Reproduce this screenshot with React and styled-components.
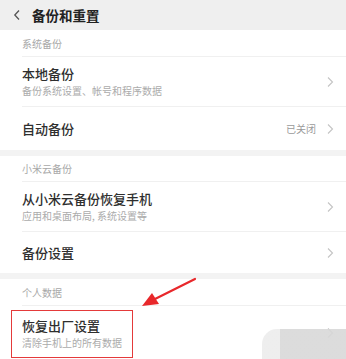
import React from "react";
import styled, { createGlobalStyle } from "styled-components";

const GlobalStyle = createGlobalStyle`
  html, body { margin: 0; padding: 0; background: #ffffff; }
  body { font-family: "Noto Sans CJK SC", "Noto Sans", sans-serif; }
`;

const Page = styled.div`
  position: relative;
  width: 346px;
  height: 359px;
  overflow: hidden;
  background: #ffffff;
`;

const Header = styled.div`
  display: flex;
  align-items: center;
  height: 30px;
  padding-left: 13px;
  gap: 11px;
  background: #efefef;
  color: #222;
  font-size: 13.5px;
  font-weight: 700;
`;

const SectionLabel = styled.div`
  display: flex;
  align-items: center;
  height: ${(p) => p.height}px;
  margin-left: 22px;
  border-bottom: 1px solid #f0f0f0;
  font-size: 10px;
  color: #a8a8a8;
  box-sizing: border-box;
`;

const Band = styled.div`
  height: 6px;
  background: #f3f3f3;
`;

const Row = styled.div`
  display: flex;
  align-items: center;
  height: ${(p) => p.height}px;
  margin-left: 22px;
  padding-right: 12px;
  box-sizing: border-box;
  border-bottom: ${(p) => (p.last ? "none" : "1px solid #f0f0f0")};
`;

const Texts = styled.div`
  flex: 1;
  display: flex;
  flex-direction: column;
  gap: 3px;
`;

const Highlight = styled.div`
  display: flex;
  flex-direction: column;
  gap: 3px;
  align-self: flex-start;
  margin: 4px 0 0 -11px;
  padding: 7px 10px 8px;
  border: 1.5px solid #e43a3a;
`;

const Title = styled.div`
  font-size: 13px;
  font-weight: 500;
  color: #2e2e2e;
  line-height: 16px;
`;

const Sub = styled.div`
  font-size: 10px;
  color: #ababab;
  line-height: 12px;
`;

const Status = styled.span`
  font-size: 10px;
  color: #9a9a9a;
  margin-right: 10px;
`;

const Overlay = styled.svg`
  position: absolute;
  left: 0;
  top: 0;
  pointer-events: none;
`;

const Watermark = styled.div`
  position: absolute;
  right: 0;
  bottom: 0;
  width: 84px;
  height: 30px;
  border-radius: 15px 0 0 0;
  background: linear-gradient(90deg, #ececec 0 22%, #d8d8d8 22% 100%);
  opacity: 0.9;
`;

const Chevron = ({ color = "#c4c4c4" }) => (
  <svg width="8" height="12" viewBox="0 0 8 12">
    <path d="M2 1.5 L6.5 6 L2 10.5" fill="none" stroke={color} strokeWidth="1.1" />
  </svg>
);

const Back = () => (
  <svg width="8" height="12" viewBox="0 0 8 12">
    <path d="M6 1.5 L1.8 6 L6 10.5" fill="none" stroke="#555" strokeWidth="1.3" />
  </svg>
);

export default function App() {
  return (
    <Page>
      <GlobalStyle />
      <Header>
        <Back />
        <span>备份和重置</span>
      </Header>

      <SectionLabel height={27}>系统备份</SectionLabel>
      <Row height={50}>
        <Texts>
          <Title>本地备份</Title>
          <Sub>备份系统设置、帐号和程序数据</Sub>
        </Texts>
        <Chevron />
      </Row>
      <Row height={43} last>
        <Texts>
          <Title>自动备份</Title>
        </Texts>
        <Status>已关闭</Status>
        <Chevron />
      </Row>

      <Band />
      <SectionLabel height={26}>小米云备份</SectionLabel>
      <Row height={50}>
        <Texts>
          <Title>从小米云备份恢复手机</Title>
          <Sub>应用和桌面布局, 系统设置等</Sub>
        </Texts>
        <Chevron />
      </Row>
      <Row height={41} last>
        <Texts>
          <Title>备份设置</Title>
        </Texts>
        <Chevron />
      </Row>

      <Band />
      <SectionLabel height={27}>个人数据</SectionLabel>
      <Row height={53} last>
        <Highlight>
          <Title>恢复出厂设置</Title>
          <Sub>清除手机上的所有数据</Sub>
        </Highlight>
        <Texts />
        <Chevron />
      </Row>

      <Overlay width="346" height="359" viewBox="0 0 346 359">
        <path d="M195 279 L155 299" stroke="#e8282b" strokeWidth="2.2" strokeLinecap="round" />
        <polygon points="142,306 152,293 159,304" fill="#e8282b" />
      </Overlay>
      <Watermark />
    </Page>
  );
}
